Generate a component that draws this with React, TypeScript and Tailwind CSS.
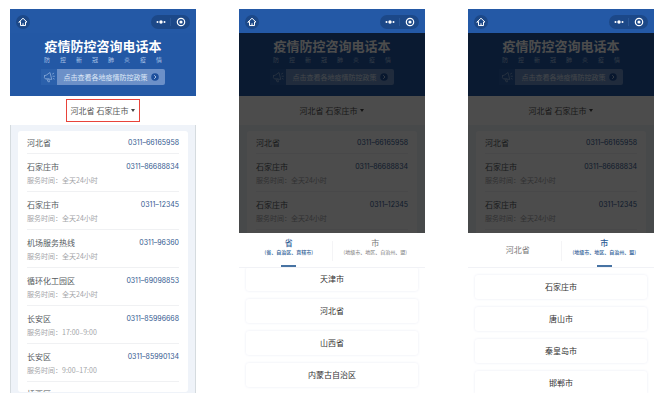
import type { ReactNode } from "react";

type Contact = { name: string; phone: string; hours?: string };

const contacts: Contact[] = [
  { name: "河北省", phone: "0311-66165958" },
  { name: "石家庄市", phone: "0311-86688834", hours: "全天24小时" },
  { name: "石家庄市", phone: "0311-12345", hours: "全天24小时" },
  { name: "机场服务热线", phone: "0311-96360", hours: "全天24小时" },
  { name: "循环化工园区", phone: "0311-69098853", hours: "全天24小时" },
  { name: "长安区", phone: "0311-85996668", hours: "17:00–9:00" },
  { name: "长安区", phone: "0311-85990134", hours: "9:00–17:00" },
];

function HomeIcon() {
  return (
    <svg viewBox="0 0 24 24" className="size-2.5" fill="none" stroke="white" strokeWidth="2.4" strokeLinejoin="round" strokeLinecap="round">
      <path d="M2.5 12 12 3l9.500 9H18v8.500H6V12Z" />
      <path d="M12 20v-4" />
    </svg>
  );
}

function MegaphoneIcon() {
  return (
    <svg viewBox="0 0 24 24" className="size-3" fill="none" stroke="#8aabd9" strokeWidth="1.600" strokeLinejoin="round" strokeLinecap="round">
      <path d="M3 9.500 7 8l7-5 3.500 14-9-1.500-3.500.500Q1.500 14 3 9.500Z" />
      <path d="m8 16 2 5.500h3L11.500 16" />
      <path d="m19 6 2.500-1.500M20 10.500h3M20.500 15l2 1" />
    </svg>
  );
}

function TopBar() {
  return (
    <header className="flex h-6 shrink-0 items-center justify-between bg-[#2459a6] px-1.5 pt-0.5">
      <button aria-label="首页" className="flex size-3.5 items-center justify-center rounded-full bg-[#1c4888]">
        <HomeIcon />
      </button>
      <div className="flex h-3.5 w-[39px] items-center rounded-full bg-[#1c4888]">
        <button aria-label="更多" className="flex flex-1 items-center justify-center">
          <svg viewBox="0 0 10 4" className="h-1 w-2.5" fill="white">
            <circle cx="1.500" cy="2" r="1" />
            <circle cx="5" cy="2" r="1.700" />
            <circle cx="8.500" cy="2" r="1" />
          </svg>
        </button>
        <span className="h-2 w-px bg-[#2a5797]" />
        <button aria-label="关闭" className="flex flex-1 items-center justify-center">
          <svg viewBox="0 0 10 10" className="size-2.5">
            <circle cx="5" cy="5" r="3.700" fill="none" stroke="white" strokeWidth="1.200" />
            <circle cx="5" cy="5" r="1.600" fill="white" />
          </svg>
        </button>
      </div>
    </header>
  );
}

function Hero() {
  return (
    <div className="flex shrink-0 flex-col items-center bg-[#2358a5] pt-[5px] pb-[11px] text-white">
      <h1 className="text-[13px] leading-4 font-bold whitespace-nowrap">疫情防控咨询电话本</h1>
      <p className="mt-0.5 flex w-[118px] justify-between text-[6px] leading-2 text-[#a9c2e6]">
        {Array.from("防控新冠肺炎疫情").map((char) => (
          <span key={char}>{char}</span>
        ))}
      </p>
      <div className="mt-[5px] flex h-4 w-[124px]">
        <span className="flex w-4 items-center justify-center bg-[#2b60ab]">
          <MegaphoneIcon />
        </span>
        <button className="flex flex-1 items-center justify-center gap-[3px] rounded-r-[2px] bg-[#6c90c8] text-[7px] leading-4 whitespace-nowrap text-[#dfe9f7]">
          点击查看各地疫情防控政策
          <svg viewBox="0 0 8 8" className="size-2">
            <circle cx="4" cy="4" r="3.800" fill="#1d4f9c" />
            <path d="m3.200 2.200 1.800 1.800-1.800 1.800" fill="none" stroke="#b9cdea" strokeWidth=".9" />
          </svg>
        </button>
      </div>
    </div>
  );
}

function RegionPicker({ highlighted }: { highlighted?: boolean }) {
  return (
    <div className="flex h-[29px] shrink-0 items-center justify-center bg-white">
      <button
        aria-haspopup="dialog"
        className={`flex h-[23px] items-center gap-[3px] border px-1 text-[8px] whitespace-nowrap text-[#555] ${highlighted ? "border-[#e8433a]" : "border-transparent"}`}
      >
        河北省 石家庄市
        <svg viewBox="0 0 4 3" className="h-[3px] w-1" fill="#444">
          <path d="M0 0h4L2 3Z" />
        </svg>
      </button>
    </div>
  );
}

function ContactRow({ contact }: { contact: Contact }) {
  return (
    <li className={`shrink-0 border-b border-[#f0f1f3] ${contact.hours ? "h-[38px] pt-2" : "h-[23px] pt-[7px]"}`}>
      <div className="flex items-center justify-between leading-[10px]">
        <span className="text-[8px] text-[#555a60]">{contact.name}</span>
        {contact.phone && (
          <a href={`tel:${contact.phone}`} className="font-[Inter,sans-serif] text-[7px] text-[#33598f]">
            {contact.phone.replace("-", "–")}
          </a>
        )}
      </div>
      {contact.hours && (
        <p className="mt-[3px] text-[7px] leading-[10px] text-[#a3a5a8]">服务时间：{contact.hours}</p>
      )}
    </li>
  );
}

function Phone({ rows, highlighted, children }: { rows: Contact[]; highlighted?: boolean; children?: ReactNode }) {
  return (
    <section className="relative flex h-96 flex-col overflow-hidden bg-[#eff3f9]">
      <TopBar />
      <Hero />
      <RegionPicker highlighted={highlighted} />
      <div className={`flex min-h-0 flex-1 flex-col pt-1.5 pb-px ${highlighted ? "border-x border-[#d5dbdf] px-[7px]" : "px-2"}`}>
        <ul className="flex min-h-0 flex-1 flex-col overflow-hidden rounded-[3px] bg-white px-[9px]">
          {rows.map((contact) => (
            <ContactRow key={contact.phone} contact={contact} />
          ))}
        </ul>
      </div>
      {children}
    </section>
  );
}

function Tab({ label, note, active }: { label: string; note?: string; active?: boolean }) {
  return (
    <button
      role="tab"
      aria-selected={!!active}
      className={`flex flex-1 flex-col items-center whitespace-nowrap ${active ? "font-medium text-[#2b5c95]" : "text-[#777]"}`}
    >
      <span className={`text-[8px] leading-[10px] ${note ? "mt-[5px]" : "mt-3"}`}>{label}</span>
      {note && <span className="text-[5px] leading-[7px]">{note}</span>}
      {active && <span className="mt-auto h-0.5 w-[15px] bg-[#4773a3]" />}
    </button>
  );
}

function RegionSheet({ tabs, options, scrolled }: { tabs: ReactNode; options: string[]; scrolled?: boolean }) {
  return (
    <div className="absolute inset-x-0 top-6 bottom-0 flex flex-col justify-end bg-black/70">
      <div role="dialog" aria-label="选择地区" className="flex h-40 flex-col overflow-hidden bg-white">
        <div role="tablist" className="flex h-[35px] shrink-0 border-b border-[#f1f2f6] px-[7px]">
          {tabs}
        </div>
        <div className="min-h-0 flex-1 overflow-hidden">
          <div className={`flex flex-col gap-2 px-[7px] ${scrolled ? "-mt-px" : "pt-[7px]"}`}>
            {options.map((option) => (
              <button
                key={option}
                className="h-6 shrink-0 rounded-[3px] text-[8px] leading-3 text-[#333] shadow-[0_0_3px_#e9ebf4]"
              >
                {option}
              </button>
            ))}
          </div>
        </div>
      </div>
    </div>
  );
}

const provinceNote = "(省、自治区、直辖市)";
const cityNote = "(地级市、地区、自治州、盟)";

export default function App() {
  return (
    <main className="grid grid-cols-3 gap-x-[43px] bg-white pt-[9px] pr-[14px] pl-[10px] font-['Noto_Sans_CJK_SC',sans-serif]">
      <Phone rows={[...contacts, { name: "桥西区", phone: "" }]} highlighted />
      <Phone rows={contacts.slice(0, 3)}>
        <RegionSheet
          scrolled
          tabs={
            <>
              <Tab label="省" note={provinceNote} active />
              <span className="mt-2 h-5 w-px bg-[#f4f4f6]" />
              <Tab label="市" note={cityNote} />
            </>
          }
          options={["天津市", "河北省", "山西省", "内蒙古自治区"]}
        />
      </Phone>
      <Phone rows={contacts.slice(0, 3)}>
        <RegionSheet
          tabs={
            <>
              <Tab label="河北省" />
              <span className="mt-2 h-5 w-px bg-[#f4f4f6]" />
              <Tab label="市" note={cityNote} active />
            </>
          }
          options={["石家庄市", "唐山市", "秦皇岛市", "邯郸市"]}
        />
      </Phone>
    </main>
  );
}
